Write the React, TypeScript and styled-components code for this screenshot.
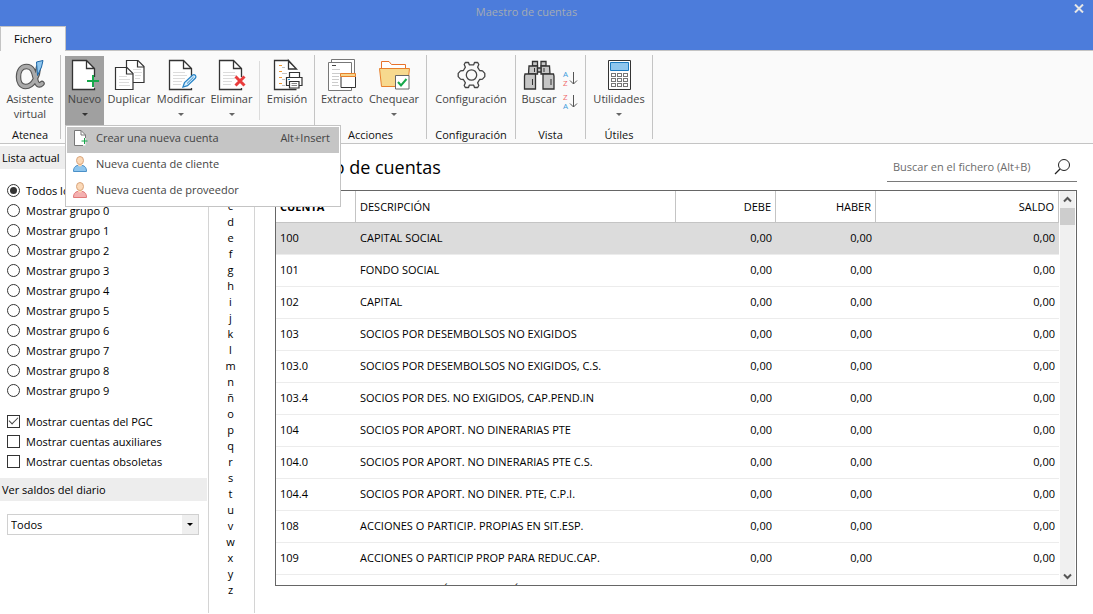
import React from "react";
import styled, { createGlobalStyle, css } from "styled-components";

const GlobalStyle = createGlobalStyle`
  *, *::before, *::after { box-sizing: border-box; }
  body {
    margin: 0;
    background: #fff;
    color: #000;
    font: 11px/15px "Open Sans", "Noto Sans", sans-serif;
  }
  button, input, select {
    font: inherit;
    color: inherit;
    margin: 0;
    padding: 0;
    border: 0;
    background: none;
  }
  svg { display: block; flex: none; }
`;

const Window = styled.div`
  display: flex;
  flex-direction: column;
  height: 100vh;
`;

/* ---------- title bar and tabs ---------- */

const TopBar = styled.header`
  display: flex;
  flex-direction: column;
  justify-content: space-between;
  height: 51px;
  flex: none;
  background: #4c7cdb;
`;

const TitleRow = styled.div`
  display: flex;
  align-items: flex-start;
`;

const WindowTitle = styled.div`
  flex: 1;
  padding-top: 4px;
  text-align: center;
  color: #a3abb3;
`;

const CloseButton = styled.button`
  display: flex;
  justify-content: center;
  width: 28px;
  height: 18px;
  margin-left: 12px;
  padding-top: 4px;
`;

const Tabs = styled.nav`
  display: flex;
  &::after {
    content: "";
    flex: 1;
    border-bottom: 1px solid #c4c4c4;
  }
`;

const Tab = styled.button`
  width: 66px;
  height: 25px;
  padding-bottom: 2px;
  border: 1px solid #c4c4c4;
  border-bottom: 0;
  background: #fafafa;
`;

/* ---------- ribbon ---------- */

const Ribbon = styled.div`
  display: flex;
  flex: none;
  height: 93px;
  background: #fafafa;
  border-bottom: 1px solid #c4c4c4;
`;

const Divider = styled.div<{ $short?: boolean }>`
  flex: none;
  width: 1px;
  height: ${(p) => (p.$short ? 59 : 84)}px;
  margin-top: ${(p) => (p.$short ? 5 : 4)}px;
  margin-left: ${(p) => (p.$short ? 4 : 0)}px;
  background: ${(p) => (p.$short ? "#dcdcdc" : "#c4c4c4")};
`;

const Group = styled.section<{ $width?: number; $inset?: number }>`
  display: flex;
  flex-direction: column;
  flex: none;
  min-width: ${(p) => (p.$width ? `${p.$width}px` : "0")};
  padding-top: 5px;
  padding-left: ${(p) => p.$inset ?? 0}px;
`;

const Tools = styled.div`
  display: flex;
  height: 69px;
`;

const Caption = styled.div`
  margin-top: 2px;
  text-align: center;
  color: #111;
`;

const ToolWrap = styled.div`
  position: relative;
`;

const Caret = styled.span`
  margin-top: 7px;
  border: 3px solid transparent;
  border-top-color: #666;
  border-bottom: 0;
`;

const Tool = styled.button<{ $width: number; $open?: boolean }>`
  display: flex;
  flex-direction: column;
  align-items: center;
  width: ${(p) => p.$width}px;
  height: 69px;
  padding-top: 2px;
  color: #444;
  white-space: nowrap;
  background: ${(p) => (p.$open ? "#a0a0a0" : "transparent")};
  ${Caret} {
    border-top-color: ${(p) => (p.$open ? "#333" : "#666")};
  }
`;

const SortColumn = styled.div`
  display: flex;
  flex-direction: column;
  gap: 1px;
  padding-top: 11px;
`;

const IconButton = styled.button`
  display: block;
`;

/* ---------- drop-down menu ---------- */

const Menu = styled.div`
  position: absolute;
  top: 100%;
  left: 0;
  z-index: 10;
  width: 276px;
  padding: 1px;
  border: 1px solid #c4c4c4;
  background: #fff;
`;

const MenuItem = styled.button<{ $active?: boolean }>`
  display: flex;
  align-items: center;
  gap: 5px;
  width: 100%;
  height: 26px;
  padding: 0 9px 5px 6px;
  color: #444;
  text-align: left;
  background: ${(p) => (p.$active ? "#c5c5c5" : "transparent")};
`;

const Shortcut = styled.span`
  margin-left: auto;
`;

/* ---------- side panel ---------- */

const Body = styled.div`
  display: flex;
  flex: 1;
  min-height: 0;
  padding-bottom: 1px;
`;

const SidePanel = styled.aside`
  flex: none;
  width: 209px;
  padding: 2px 1px 0 0;
  border-right: 1px solid #d4d4d4;
`;

const PanelTitle = styled.h2`
  margin: 0;
  padding: 0 2px;
  font-size: 11px;
  font-weight: 400;
  line-height: 23px;
  background: #ededed;
`;

const Options = styled.fieldset`
  margin: 0;
  padding: 11px 7px 7px;
  border: 0;
`;

const Option = styled.label<{ $first?: boolean }>`
  display: flex;
  align-items: center;
  gap: 6px;
  height: 20px;
  margin-top: ${(p) => (p.$first ? 11 : 0)}px;
`;

const box = css`
  appearance: none;
  display: grid;
  place-items: center;
  flex: none;
  width: 13px;
  height: 13px;
  border: 1px solid #333;
  background: #fff;
`;

const Radio = styled.input.attrs({ type: "radio", name: "lista" })`
  ${box}
  border-radius: 50%;
  &:checked::after {
    content: "";
    width: 7px;
    height: 7px;
    border-radius: 50%;
    background: #333;
  }
`;

const Check = styled.input.attrs({ type: "checkbox" })`
  ${box}
  &:checked::after {
    content: "";
    width: 9px;
    height: 5px;
    margin-bottom: 3px;
    border: solid #444;
    border-width: 0 0 1px 1px;
    transform: rotate(-45deg);
  }
`;

const SelectBox = styled.div`
  position: relative;
  margin: 13px 8px 0 7px;
`;

const Select = styled.select`
  appearance: none;
  display: block;
  width: 100%;
  height: 21px;
  padding-left: 3px;
  border: 1px solid #d0d0d0;
  background: #fff;
`;

const SelectArrow = styled.span`
  position: absolute;
  top: 1px;
  right: 1px;
  bottom: 1px;
  display: grid;
  place-items: center;
  width: 16px;
  background: #efefef;
  pointer-events: none;
  &::after {
    content: "";
    border: 3px solid transparent;
    border-top-color: #000;
    border-bottom: 0;
  }
`;

const Letters = styled.nav`
  display: flex;
  flex-direction: column;
  align-items: center;
  flex: none;
  width: 46px;
  padding: 22px 2px 0 0;
  border-right: 1px solid #d4d4d4;
  overflow: hidden;
`;

const Letter = styled.button`
  width: 24px;
  height: 16px;
  flex: none;
  line-height: 16px;
`;

/* ---------- accounts list ---------- */

const Main = styled.main`
  display: flex;
  flex-direction: column;
  flex: 1;
  min-width: 0;
  padding: 0 16px 27px 20px;
`;

const ListHeader = styled.div`
  display: flex;
  align-items: flex-end;
  justify-content: space-between;
  height: 38px;
  margin-bottom: 8px;
  flex: none;
`;

const Heading = styled.h1`
  margin: 0;
  font-size: 18px;
  font-weight: 400;
  line-height: 30px;
`;

const Search = styled.label`
  display: flex;
  align-items: center;
  width: 190px;
  height: 30px;
  padding: 0 6px;
  border-bottom: 1px solid #7a7a7a;
`;

const SearchInput = styled.input`
  flex: 1;
  min-width: 0;
  outline: 0;
  &::placeholder { color: #6c6c6c; opacity: 1; }
`;

const Frame = styled.div`
  display: flex;
  flex: 1;
  min-height: 0;
  border: 1px solid #666;
`;

const Rows = styled.div`
  flex: 1;
  min-width: 0;
  overflow: hidden;
`;

const Table = styled.table`
  width: 100%;
  table-layout: fixed;
  border-collapse: separate;
  border-spacing: 0;
`;

const Col = styled.col<{ $width?: number }>`
  width: ${(p) => (p.$width ? `${p.$width}px` : "auto")};
`;

const Th = styled.th<{ $right?: boolean; $bold?: boolean }>`
  height: 32px;
  padding: 0 4px;
  border-right: 1px solid #c4c4c4;
  border-bottom: 1px solid #c4c4c4;
  font-weight: ${(p) => (p.$bold ? 700 : 400)};
  text-align: ${(p) => (p.$right ? "right" : "left")};
`;

const Row = styled.tr<{ $selected?: boolean }>`
  background: ${(p) => (p.$selected ? "#dcdcdc" : "#fff")};
`;

const Td = styled.td<{ $right?: boolean }>`
  height: 32px;
  padding: 0 4px 2px;
  border-bottom: 1px solid #ececec;
  text-align: ${(p) => (p.$right ? "right" : "left")};
  white-space: nowrap;
`;

const ScrollBar = styled.div`
  display: flex;
  flex-direction: column;
  flex: none;
  width: 15px;
  margin: 0 1px;
  background: #f0f0f0;
`;

const ScrollButton = styled.button`
  display: grid;
  place-items: center;
  height: 17px;
`;

const Thumb = styled.div`
  height: 17px;
  margin-bottom: auto;
  background: #cdcdcd;
`;

/* ---------- icons ---------- */

const INK = "#333";

const Ico = ({ children }: { children: React.ReactNode }) => (
  <svg width="33" height="33" viewBox="0 0 33 33" fill="none" aria-hidden="true">
    {children}
  </svg>
);

const Sheet = ({ lines }: { lines?: boolean }) => (
  <>
    <path d="M4.500 2.500H18L26 11V31.500H4.500Z" fill="#fff" />
    <path d="M26.500 19V10.500L18.500 2.500H4.500V31.500H26.500V30M18.500 2.500V10.500H26.500" stroke={INK} strokeWidth="1.300" />
    {lines && <path d="M8 14.500H20M8 17.500H22M8 20.500H20M8 23.500H17M8 26.500H16" stroke="#dcdcdc" />}
  </>
);

const ALPHA =
  "M24.500 9C24 17 20 28.500 11.500 28.500C6.500 28.500 4.500 24 4.500 19C4.500 12.500 7.500 8.500 12.500 8.500C19 8.500 20 15 21.500 21C22.700 26.500 25 28.500 28 25.500";

const AssistantIcon = () => (
  <Ico>
    <path d={ALPHA} stroke="#555" strokeWidth="5.500" strokeLinecap="round" />
    <path d={ALPHA} stroke="#aaa" strokeWidth="3.300" strokeLinecap="round" />
    <path d="M22.500 4L29 2.500L27.500 9L23.500 17.500Z" fill="#8fc6ee" stroke="#1c66a8" />
  </Ico>
);

const NewIcon = () => (
  <Ico>
    <Sheet />
    <path d="M25 17V29M19 23H31" stroke="#17a84b" strokeWidth="2" />
  </Ico>
);

const CopyIcon = () => (
  <Ico>
    <path d="M13.500 2.500H25L31 8.500V24.500H13.500Z" fill="#fff" stroke={INK} strokeWidth="1.200" />
    <path d="M24.500 2.500V9H31" stroke={INK} strokeWidth="1.200" />
    <path d="M20 11.500H28M21 14.500H29M22 17.500H28M22 20.500H27" stroke="#dcdcdc" />
    <path d="M2.500 9.500H14L20 15.500V31.500H2.500Z" fill="#fff" stroke={INK} strokeWidth="1.200" />
    <path d="M13.500 9.500V16H20" stroke={INK} strokeWidth="1.200" />
    <path d="M6 18.500H14M6 21.500H17M6 24.500H16M6 27.500H17" stroke="#dcdcdc" />
  </Ico>
);

const EditIcon = () => (
  <Ico>
    <Sheet lines />
    <path d="M18 29L19.500 24.500L27.500 17.200Q29 16 30.500 17.500Q31.500 19 30.300 20.200L22.500 27.700Z" fill="#d9edfb" stroke="#2a86c8" strokeWidth="1.300" />
    <path d="M22 25.500L28.500 19.200" stroke="#2a86c8" />
  </Ico>
);

const DeleteIcon = () => (
  <Ico>
    <Sheet lines />
    <path d="M20.500 18.500L29.500 27.500M29.500 18.500L20.500 27.500" stroke="#e93c3c" strokeWidth="3" />
  </Ico>
);

const PrintIcon = () => (
  <Ico>
    <path d="M3.500 2.500H17L25.500 11V31.500H3.500Z" fill="#fff" />
    <path d="M17 2.500H3.500V31.500H25.500M17.500 2.500V11H25.500ZM17 2.500L25.500 11" stroke={INK} strokeWidth="1.300" />
    <path d="M8 7.500H11M8 13.500H11M8 19.500H11M8 25.500H11" stroke="#f09a36" />
    <path d="M11 9.500H14M11 15.500H16M11 21.500H14M11 27.500H14" stroke="#c4c4c4" />
    <path d="M18.500 19V14.500H28.500V19" fill="#fff" stroke={INK} strokeWidth="1.200" />
    <path d="M15.500 19.500H31V27.500H15.500Z" fill="#fff" stroke={INK} strokeWidth="1.200" />
    <path d="M18.500 23.500H28V30H18.500Z" fill="#fff" stroke={INK} strokeWidth="1.200" />
    <path d="M20.500 25.500H26M20.500 27.500H26" stroke="#888" />
    <path d="M17 21.500H19" stroke="#2a9fd8" />
  </Ico>
);

const ExtractIcon = () => (
  <Ico>
    <path d="M5.500 1.500H28.500V29H5.500Z" fill="#fff" stroke="#777" />
    <path d="M2.500 4.500H25.500V32.500H2.500Z" fill="#fff" stroke="#777" />
    <path d="M6 7.500H10" stroke="#444" />
    <path d="M6 11.500H14M6 15.500H21M6 18.500H13M6 21.500H13M6 24.500H12M6 27.500H13" stroke="#ccc" />
    <path d="M15 18.500V29.500H29.500V18.500" fill="#fff" stroke={INK} />
    <path d="M14.500 15.500H29.500V18.500H14.500Z" fill="#f7d58c" stroke="#e8802c" />
  </Ico>
);

const CheckFolderIcon = () => (
  <Ico>
    <path d="M3.500 10V3.500H11L13.500 6.500H27.500V10" fill="#fff" stroke="#e8722a" />
    <path d="M1.500 10.500H31.500L29.500 28.500H3.500Z" fill="#f7d98e" stroke="#e8802c" />
    <path d="M17.500 17.500H31V31H17.500Z" fill="#fff" stroke="#666" />
    <path d="M20 24L23 27.500L28.500 21" stroke="#17a84b" strokeWidth="2" />
  </Ico>
);

const GearIcon = () => (
  <Ico>
    <g stroke="#444" strokeWidth="1.300" strokeLinejoin="round">
      <path d="M10.300 4.500L13.500 4.500L14.300 6.800H18.700L19.500 4.500H22.700L23.800 6.500L22.600 9.200L24.600 12.500L27.500 12.900L29.800 15.400V18.600L27.500 21.100L24.600 21.500L22.600 24.800L23.800 27.500L22.700 29.500H19.500L18.700 27.200H14.300L13.500 29.500H10.300L9.200 27.500L10.400 24.800L8.400 21.500L5.500 21.100L3.200 18.600V15.400L5.500 12.900L8.400 12.500L10.400 9.200L9.200 6.500Z" />
      <circle cx="16.500" cy="17" r="5.200" />
    </g>
  </Ico>
);

const BinocularsIcon = () => (
  <Ico>
    <g fill="#c6c6c6" stroke={INK} strokeWidth="1.300">
      <path d="M9.500 3.500H14.500V8H9.500ZM18 3.500H23V8H18Z" />
      <path d="M6 8H14.500V16H5.500ZM18 8H26.500L27 16H18Z" />
      <path d="M2 16H12.500V31H1.500V18ZM20 16H30.500L31 18V31H20Z" />
      <path d="M14.500 10H18V14H14.500Z" />
    </g>
    <path d="M9.500 21V27M28 21V27M11.500 10V14M21 10V14" stroke={INK} />
  </Ico>
);

const CalculatorIcon = () => (
  <Ico>
    <path d="M5.500 2.500H27.500V31.500H5.500Z" fill="#fff" stroke={INK} />
    <path d="M7.500 4.500H25.500V12.500H7.500Z" fill="#8fc6ee" stroke="#1c7ac0" />
    {[15.5, 20.5, 25.5].map((y) =>
      [8.5, 14.5, 20.5].map((x) => (
        <rect key={`${x}-${y}`} x={x} y={y} width="4" height="3" fill="#fff" stroke="#777" />
      ))
    )}
  </Ico>
);

const SortIcon = ({ up }: { up?: boolean }) => (
  <svg width="16" height="22" viewBox="0 0 16 22" fill="none" aria-hidden="true">
    <text x="1" y="10" fontSize="8" fill={up ? "#ef6a6a" : "#3f9bdc"}>{up ? "Z" : "A"}</text>
    <text x="1" y="19" fontSize="8" fill={up ? "#3f9bdc" : "#ef6a6a"}>{up ? "A" : "Z"}</text>
    <path d="M11.500 5V17M8 13.500L11.500 17L15 13.500" stroke="#555" />
  </svg>
);

const SmallSheetIcon = () => (
  <svg width="18" height="18" viewBox="0 0 18 18" fill="none" aria-hidden="true">
    <path d="M1.500 1.500H8L12.500 6V16.500H1.500Z" fill="#fff" />
    <path d="M12.500 9V6L8 1.500H1.500V16.500H10M8 1.500V6H12.500" stroke="#777" />
    <path d="M11.500 9V15M8.500 12H14.500" stroke="#17a84b" />
  </svg>
);

const PersonIcon = ({ fill, line }: { fill: string; line: string }) => (
  <svg width="18" height="18" viewBox="0 0 18 18" fill="none" aria-hidden="true">
    <path d="M0.500 16.500C0.500 12 2.500 10.500 7 10C11.500 10.500 13.500 12 13.500 16.500Z" fill={fill} stroke={line} />
    <path d="M5 8V10.500Q7 12.500 9 10.500V8Z" fill="#fbd9b8" />
    <ellipse cx="7" cy="5.500" rx="3.500" ry="4" fill="#fbd9b8" stroke="#d9a57c" />
  </svg>
);

const MagnifierIcon = () => (
  <svg width="17" height="17" viewBox="0 0 17 17" fill="none" stroke="#222" aria-hidden="true">
    <circle cx="10" cy="7" r="5.500" />
    <path d="M6 11L1 16" strokeWidth="1.300" />
  </svg>
);

const Chevron = ({ down }: { down?: boolean }) => (
  <svg width="9" height="7" viewBox="0 0 9 7" fill="none" stroke="#555" strokeWidth="2" aria-hidden="true">
    <path d={down ? "M1 1.500L4.500 5L8 1.500" : "M1 5.500L4.500 2L8 5.500"} />
  </svg>
);

/* ---------- data ---------- */

const groups = [
  "Todos los grupos",
  ...Array.from({ length: 10 }, (_, i) => `Mostrar grupo ${i}`),
];

const filters = ["Mostrar cuentas del PGC", "Mostrar cuentas auxiliares", "Mostrar cuentas obsoletas"];

const alphabet = [..."abcdefghijklmnñopqrstuvwxyz"];

const accounts = [
  ["100", "CAPITAL SOCIAL"],
  ["101", "FONDO SOCIAL"],
  ["102", "CAPITAL"],
  ["103", "SOCIOS POR DESEMBOLSOS NO EXIGIDOS"],
  ["103.0", "SOCIOS POR DESEMBOLSOS NO EXIGIDOS, C.S."],
  ["103.4", "SOCIOS POR DES. NO EXIGIDOS, CAP.PEND.IN"],
  ["104", "SOCIOS POR APORT. NO DINERARIAS PTE"],
  ["104.0", "SOCIOS POR APORT. NO DINERARIAS PTE C.S."],
  ["104.4", "SOCIOS POR APORT. NO DINER. PTE, C.P.I."],
  ["108", "ACCIONES O PARTICIP. PROPIAS EN SIT.ESP."],
  ["109", "ACCIONES O PARTICIP PROP PARA REDUC.CAP."],
  ["110", "PRIMA DE EMISIÓN O ASUNCIÓN"],
];

export default function App() {
  return (
    <Window>
      <GlobalStyle />
      <TopBar>
        <TitleRow>
          <WindowTitle>Maestro de cuentas</WindowTitle>
          <CloseButton aria-label="Cerrar">
            <svg width="10" height="9" viewBox="0 0 10 9" stroke="#e6e6e6" strokeWidth="2">
              <path d="M1 0.500L9 8.500M9 0.500L1 8.500" />
            </svg>
          </CloseButton>
        </TitleRow>
        <Tabs>
          <Tab>Fichero</Tab>
        </Tabs>
      </TopBar>

      <Ribbon>
        <Group>
          <Tools>
            <Tool $width={60}>
              <AssistantIcon />
              Asistente
              <br />
              <span>virtual</span>
            </Tool>
          </Tools>
          <Caption>Atenea</Caption>
        </Group>
        <Divider />
        <Group $inset={4}>
          <Tools>
            <ToolWrap>
              <Tool $width={39} $open aria-haspopup="menu" aria-expanded="true">
                <NewIcon />
                Nuevo
                <Caret />
              </Tool>
              <Menu role="menu">
                <MenuItem role="menuitem" $active>
                  <SmallSheetIcon />
                  Crear una nueva cuenta
                  <Shortcut>Alt+Insert</Shortcut>
                </MenuItem>
                <MenuItem role="menuitem">
                  <PersonIcon fill="#8fc6ee" line="#4a90c8" />
                  Nueva cuenta de cliente
                </MenuItem>
                <MenuItem role="menuitem">
                  <PersonIcon fill="#f4b0b0" line="#e07878" />
                  Nueva cuenta de proveedor
                </MenuItem>
              </Menu>
            </ToolWrap>
            <Tool $width={50}>
              <CopyIcon />
              Duplicar
            </Tool>
            <Tool $width={54}>
              <EditIcon />
              Modificar
              <Caret />
            </Tool>
            <Tool $width={47}>
              <DeleteIcon />
              Eliminar
              <Caret />
            </Tool>
            <Divider $short />
            <Tool $width={54}>
              <PrintIcon />
              Emisión
            </Tool>
          </Tools>
        </Group>
        <Divider />
        <Group $width={111}>
          <Tools>
            <Tool $width={54}>
              <ExtractIcon />
              Extracto
            </Tool>
            <Tool $width={50}>
              <CheckFolderIcon />
              Chequear
              <Caret />
            </Tool>
          </Tools>
          <Caption>Acciones</Caption>
        </Group>
        <Divider />
        <Group>
          <Tools>
            <Tool $width={88}>
              <GearIcon />
              Configuración
            </Tool>
          </Tools>
          <Caption>Configuración</Caption>
        </Group>
        <Divider />
        <Group $width={69}>
          <Tools>
            <Tool $width={46}>
              <BinocularsIcon />
              Buscar
            </Tool>
            <SortColumn>
              <IconButton aria-label="Orden ascendente">
                <SortIcon />
              </IconButton>
              <IconButton aria-label="Orden descendente">
                <SortIcon up />
              </IconButton>
            </SortColumn>
          </Tools>
          <Caption>Vista</Caption>
        </Group>
        <Divider />
        <Group>
          <Tools>
            <Tool $width={66}>
              <CalculatorIcon />
              Utilidades
              <Caret />
            </Tool>
          </Tools>
          <Caption>Útiles</Caption>
        </Group>
        <Divider />
      </Ribbon>

      <Body>
        <SidePanel>
          <PanelTitle>Lista actual</PanelTitle>
          <Options>
            {groups.map((name, i) => (
              <Option key={name}>
                <Radio defaultChecked={i === 0} />
                {name}
              </Option>
            ))}
            {filters.map((name, i) => (
              <Option key={name} $first={i === 0}>
                <Check defaultChecked={i === 0} />
                {name}
              </Option>
            ))}
          </Options>
          <PanelTitle>Ver saldos del diario</PanelTitle>
          <SelectBox>
            <Select aria-label="Ver saldos del diario">
              <option>Todos</option>
            </Select>
            <SelectArrow />
          </SelectBox>
        </SidePanel>

        <Letters aria-label="Índice alfabético">
          {alphabet.map((l) => (
            <Letter key={l}>{l}</Letter>
          ))}
        </Letters>

        <Main>
          <ListHeader>
            <Heading>Maestro de cuentas</Heading>
            <Search>
              <SearchInput type="text" placeholder="Buscar en el fichero (Alt+B)" aria-label="Buscar en el fichero" />
              <MagnifierIcon />
            </Search>
          </ListHeader>
          <Frame>
            <Rows>
              <Table>
                <colgroup>
                  <Col $width={80} />
                  <Col $width={320} />
                  <Col $width={100} />
                  <Col $width={100} />
                  <Col />
                </colgroup>
                <thead>
                  <tr>
                    <Th $bold>CUENTA</Th>
                    <Th>DESCRIPCIÓN</Th>
                    <Th $right>DEBE</Th>
                    <Th $right>HABER</Th>
                    <Th $right>SALDO</Th>
                  </tr>
                </thead>
                <tbody>
                  {accounts.map(([code, name], i) => (
                    <Row key={code} $selected={i === 0}>
                      <Td>{code}</Td>
                      <Td>{name}</Td>
                      <Td $right>0,00</Td>
                      <Td $right>0,00</Td>
                      <Td $right>0,00</Td>
                    </Row>
                  ))}
                </tbody>
              </Table>
            </Rows>
            <ScrollBar>
              <ScrollButton aria-label="Subir">
                <Chevron />
              </ScrollButton>
              <Thumb />
              <ScrollButton aria-label="Bajar">
                <Chevron down />
              </ScrollButton>
            </ScrollBar>
          </Frame>
        </Main>
      </Body>
    </Window>
  );
}
